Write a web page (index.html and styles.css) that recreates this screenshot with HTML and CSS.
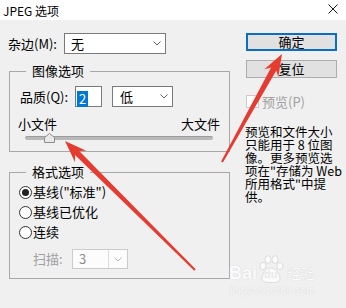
FILE: index.html
```html
<!DOCTYPE html>
<html>
<head>
<meta charset="utf-8">
<link rel="stylesheet" href="styles.css">
</head>
<body>
<div class="window">
  <div class="titlebar">
    <span class="title">JPEG 选项</span>
    <svg class="close" width="10" height="10" viewBox="0 0 10 10"><path d="M0.5 0.5L9.5 9.5M9.5 0.5L0.5 9.5" stroke="#1a1a1a" stroke-width="1" fill="none"/></svg>
  </div>
  <div class="content">
    <div class="left">
      <div class="matte-row">
        <span class="label matte-label">杂边(M):</span>
        <div class="combo matte">
          <span class="val">无</span>
          <svg class="chev" width="8" height="5" viewBox="0 0 8 5"><path d="M0.5 0.5L4 4L7.5 0.5" stroke="#606060" fill="none"/></svg>
        </div>
      </div>
      <fieldset class="group image-group">
        <legend>图像选项</legend>
        <div class="quality-row">
          <span class="label q-label">品质(Q):</span>
          <div class="num-input"><span class="sel">2</span></div>
          <div class="combo quality">
            <span class="val">低</span>
            <svg class="chev" width="8" height="5" viewBox="0 0 8 5"><path d="M0.5 0.5L4 4L7.5 0.5" stroke="#606060" fill="none"/></svg>
          </div>
        </div>
        <div class="size-labels"><span>小文件</span><span>大文件</span></div>
        <div class="slider">
          <div class="track"></div>
          <svg class="thumb" width="11" height="10" viewBox="0 0 11 10"><path d="M5.5 0.5L10.5 4.5V9.5H0.5V4.5Z" fill="#e8e8e8" stroke="#8c8c8c"/></svg>
        </div>
      </fieldset>
      <fieldset class="group format-group">
        <legend>格式选项</legend>
        <div class="radio-row"><span class="radio checked"></span><span>基线("标准")</span></div>
        <div class="radio-row"><span class="radio"></span><span>基线已优化</span></div>
        <div class="radio-row"><span class="radio"></span><span>连续</span></div>
        <div class="scan-row">
          <span class="label scan-label">扫描:</span>
          <div class="combo disabled">
            <span class="dval">3</span>
            <span class="darrow"><svg width="8" height="5" viewBox="0 0 8 5"><path d="M0.5 0.5L4 4L7.5 0.5" stroke="#b5b5b5" fill="none"/></svg></span>
          </div>
        </div>
      </fieldset>
    </div>
    <div class="right">
      <button class="btn primary">确定</button>
      <button class="btn">复位</button>
      <div class="check-row"><span class="checkbox"></span><span class="dim">预览(P)</span></div>
      <p class="desc">预览和文件大小<br>只能用于 8 位图<br>像。更多预览选<br>项在"存储为 Web<br>所用格式"中提<br>供。</p>
    </div>
  </div>
  <svg class="arrows" width="346" height="308" viewBox="0 0 346 308">
    <polygon points="282,54 278.3,77.1 276.3,70.4 222.9,162.5 221.1,161.5 271.1,67.4 264.3,69.3" fill="#e63b30"/>
    <polygon points="65,141 86.2,150.8 79.2,150.9 195.7,269.3 194.3,270.7 75,155.1 75,162.2" fill="#e63b30"/>
  </svg>
  <div class="watermark">
    <div class="wm-top">
      <span class="wm-bai">Bai</span>
      <span class="wm-paw">
        <svg width="26" height="28" viewBox="0 0 26 28">
          <g fill="#fbfbfb" stroke="#d6d6d6" stroke-width="0.8">
            <ellipse cx="5" cy="11" rx="3" ry="3.6"/>
            <ellipse cx="10" cy="4.5" rx="3" ry="3.8"/>
            <ellipse cx="17" cy="4.5" rx="3" ry="3.8"/>
            <ellipse cx="22" cy="11" rx="3" ry="3.6"/>
            <path d="M4 24C4 18 9 13 13 13C17 13 22 18 22 24C22 27 18 27.5 13 27.5C8 27.5 4 27 4 24Z"/>
          </g>
        </svg>
        <span class="wm-du">du</span>
      </span>
      <span class="wm-jy">经验</span>
    </div>
    <div class="wm-url">jingyan.baidu.com</div>
  </div>
</div>
</body>
</html>
```
FILE: styles.css
```css
* { box-sizing: border-box; }
body {
  margin: 0;
  background: #f0f0f0;
  font-family: "Noto Sans CJK SC", "Liberation Sans", sans-serif;
  font-size: 13px;
  color: #000;
}
.window {
  position: relative;
  width: 346px;
  height: 308px;
  overflow: hidden;
  background: #f0f0f0;
}
.titlebar {
  height: 20px;
  background: #fff;
  display: flex;
  align-items: center;
  justify-content: space-between;
  padding: 0 8px 0 3px;
}
.title {
  font-size: 12px;
  line-height: 20px;
  padding-top: 1px;
}
.close { margin-top: -2px; }

.content {
  display: flex;
  padding-top: 13px;
}
.left {
  width: 221px;
  margin-left: 9px;
  flex: none;
}
.label {
  flex: none;
  line-height: 14px;
  white-space: nowrap;
}
.matte-row {
  display: flex;
  align-items: center;
  height: 21px;
}
.matte-label { width: 56px; margin-left: -1px; }
.combo {
  height: 21px;
  border: 1px solid #7a7a7a;
  background: #fff;
  display: flex;
  align-items: center;
  justify-content: space-between;
  padding: 0 4px 0 6px;
  line-height: 14px;
}
.matte { width: 102px; }

.group {
  margin: 0;
  padding: 0;
  border: 1px solid #a8a8a8;
  min-width: 0;
}
.group legend {
  font-size: 13px;
  line-height: 14px;
  padding: 0 6px;
  margin-left: 16px;
}
.image-group { margin-top: 10px; }
.quality-row {
  display: flex;
  align-items: center;
  margin-top: 8px;
  height: 21px;
  padding-left: 10px;
}
.q-label { width: 55px; }
.num-input {
  width: 27px;
  height: 21px;
  border: 1px solid #7a7a7a;
  background: #fff;
  margin-right: 10px;
  padding: 2px 0 0 1px;
}
.sel {
  display: inline-block;
  background: #0078d7;
  color: #fff;
  line-height: 16px;
  padding: 0 2px;
}
.quality { width: 61px; padding-left: 7px; }

.size-labels {
  display: flex;
  justify-content: space-between;
  margin-top: 10px;
  padding: 0 9px 0 8px;
  line-height: 14px;
}
.slider {
  position: relative;
  margin: 5px 0 11px 15px;
  width: 188px;
  height: 4px;
}
.track {
  height: 4px;
  border-radius: 2px;
  background: #b9b9b9;
  border-top: 1px solid #9c9c9c;
}
.thumb {
  position: absolute;
  left: 19px;
  top: -3px;
}

.format-group { margin-top: 13px; padding-bottom: 9px; }
.radio-row {
  display: flex;
  align-items: center;
  height: 20px;
  padding-left: 9px;
  gap: 1px;
  line-height: 14px;
}
.radio-row:first-of-type { margin-top: 3px; }
.radio {
  width: 13px;
  height: 13px;
  border: 1px solid #333;
  border-radius: 50%;
  background: #fff;
  display: flex;
  align-items: center;
  justify-content: center;
  flex: none;
}
.radio.checked::after {
  content: "";
  width: 7px;
  height: 7px;
  border-radius: 50%;
  background: #222;
}
.scan-row {
  display: flex;
  align-items: center;
  margin-top: 7px;
  height: 20px;
  padding-left: 23px;
}
.scan-label { width: 39px; color: #a0a0a0; }
.combo.disabled {
  width: 56px;
  height: 20px;
  border-color: #cccccc;
  background: #fcfcfc;
  padding: 0;
  color: #8c8c8c;
}
.dval {
  flex: 1;
  height: 100%;
  border-right: 1px solid #dcdcdc;
  padding-left: 6px;
  display: flex;
  align-items: center;
}
.darrow {
  width: 18px;
  display: flex;
  justify-content: center;
  align-items: center;
}

.right {
  margin-left: 16px;
  width: 91px;
  display: flex;
  flex-direction: column;
}
.btn {
  font-family: "Noto Sans CJK SC", sans-serif;
  font-size: 13px;
  line-height: 14px;
  height: 18px;
  padding: 0;
  background: #e1e1e1;
  border: 1px solid #adadad;
  color: #000;
}
.btn.primary { border: 2px solid #0a6fc2; }
.btn + .btn { margin-top: 9px; }
.check-row {
  display: flex;
  align-items: center;
  gap: 3px;
  margin-top: 17px;
  height: 13px;
  line-height: 14px;
}
.checkbox {
  width: 13px;
  height: 13px;
  border: 1px solid #cccccc;
  background: #fff;
  flex: none;
}
.dim { color: #a0a0a0; }
.desc {
  margin: 17px 0 0 -1px;
  font-size: 12.5px;
  line-height: 13px;
  white-space: nowrap;
}

.arrows {
  position: absolute;
  left: 0;
  top: 0;
  pointer-events: none;
}
.watermark {
  position: absolute;
  left: 229px;
  top: 253px;
  color: #fbfbfb;
  text-shadow: 0 0 1px #c4c4c4;
  font-family: "Liberation Sans", sans-serif;
}
.wm-top {
  display: flex;
  align-items: flex-end;
  height: 30px;
}
.wm-bai {
  font-size: 18px;
  font-weight: bold;
  line-height: 18px;
  margin-bottom: 1px;
}
.wm-paw {
  position: relative;
  width: 26px;
  height: 28px;
  margin-left: 1px;
}
.wm-paw svg { display: block; }
.wm-du {
  position: absolute;
  left: 6px;
  top: 13px;
  font-size: 11px;
  font-weight: bold;
  line-height: 12px;
  color: #e9e9e9;
  text-shadow: none;
}
.wm-jy {
  font-family: "Noto Sans CJK SC", sans-serif;
  font-size: 14px;
  line-height: 16px;
  margin: 0 0 2px 3px;
}
.wm-url {
  font-size: 10.5px;
  line-height: 12px;
  margin-top: 1px;
  padding-left: 1px;
}
```
